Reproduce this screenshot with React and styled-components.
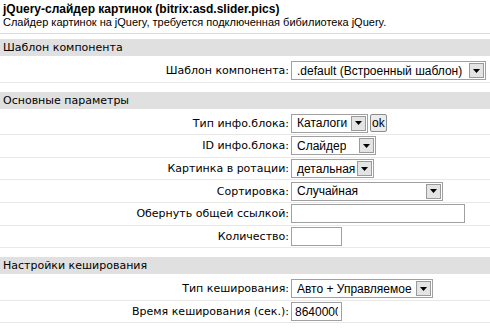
import React from "react";
import styled, { createGlobalStyle } from "styled-components";

const GlobalStyle = createGlobalStyle`
   html, body {
      margin: 0;
      padding: 0;
      background: #fff;
   }
   body {
      font-family: "DejaVu Sans", Verdana, sans-serif;
      font-size: 11px;
      color: #000;
   }
`;

const sections = [
   {
      title: "Шаблон компонента",
      rows: [
         { label: "Шаблон компонента:", type: "select", value: ".default (Встроенный шаблон)", width: 195 },
      ],
   },
   {
      title: "Основные параметры",
      rows: [
         { label: "Тип инфо.блока:", type: "select", value: "Каталоги", width: 77, ok: true },
         { label: "ID инфо.блока:", type: "select", value: "Слайдер", width: 85 },
         { label: "Картинка в ротации:", type: "select", value: "детальная", width: 83 },
         { label: "Сортировка:", type: "select", value: "Случайная", width: 152 },
         { label: "Обернуть общей ссылкой:", type: "input", value: "", width: 174 },
         { label: "Количество:", type: "input", value: "", width: 51 },
      ],
   },
   {
      title: "Настройки кеширования",
      rows: [
         { label: "Тип кеширования:", type: "select", value: "Авто + Управляемое", width: 142 },
         { label: "Время кеширования (сек.):", type: "input", value: "8640000", width: 51 },
      ],
   },
];

const SelectBox = ({ value, width }) => (
   <StyledSelect style={{ width }}>
      <SelectValue>{value}</SelectValue>
      <ArrowButton>
         <svg width="7" height="4" viewBox="0 0 7 4">
            <path d="M0 0h7L3.5 4z" fill="#000" />
         </svg>
      </ArrowButton>
   </StyledSelect>
);

const App = () => {
   return (
      <PageWrapper>
         <GlobalStyle />
         <StyledHeader>
            <Title>jQuery-слайдер картинок (bitrix:asd.slider.pics)</Title>
            <Description>
               Слайдер картинок на jQuery, требуется подключенная бибилиотека jQuery.
            </Description>
         </StyledHeader>
         {sections.map((section) => (
            <Section key={section.title}>
               <SectionTitle>{section.title}</SectionTitle>
               {section.rows.map((row, i) => (
                  <Row key={row.label} $first={i === 0}>
                     <Label>{row.label}</Label>
                     <Control>
                        {row.type === "select" ? (
                           <SelectBox value={row.value} width={row.width} />
                        ) : (
                           <TextInput style={{ width: row.width }} defaultValue={row.value} />
                        )}
                        {row.ok && <OkButton>ok</OkButton>}
                     </Control>
                  </Row>
               ))}
            </Section>
         ))}
      </PageWrapper>
   );
};

const PageWrapper = styled.div`
   width: 490px;
   height: 333px;
   overflow: hidden;
`;

const StyledHeader = styled.div`
   padding: 3px 3px 4px;
   border-bottom: 1px solid #dcdcdc;
`;

const Title = styled.div`
   font-family: "Liberation Sans", Tahoma, sans-serif;
   font-weight: bold;
   font-size: 12px;
   line-height: 13px;
`;

const Description = styled.div`
   font-family: "Liberation Sans", Tahoma, sans-serif;
   font-size: 11px;
   line-height: 13px;
`;

const Section = styled.div`
   margin-top: 5px;

   & + & {
      margin-top: 9px;
   }
`;

const SectionTitle = styled.div`
   background: #e0e0e0;
   height: 17px;
   line-height: 17px;
   padding-left: 3px;
`;

const Row = styled.div`
   display: grid;
   grid-template-columns: 289px 1fr;
   column-gap: 2px;
   align-items: center;
   height: 21.6px;
   padding-top: ${(p) => (p.$first ? "4px" : "0")};
   border-bottom: 1px solid #e8e8e8;
`;

const Label = styled.div`
   text-align: right;
   white-space: nowrap;
`;

const Control = styled.div`
   display: flex;
   align-items: center;
   gap: 2px;
`;

const StyledSelect = styled.div`
   box-sizing: border-box;
   height: 19px;
   display: flex;
   align-items: center;
   justify-content: space-between;
   border: 1px solid #a0a0a0;
   background: #fff;
   padding: 0 1px 0 5px;
`;

const SelectValue = styled.span`
   font-family: "Liberation Sans", Tahoma, sans-serif;
   font-size: 12px;
   white-space: nowrap;
   overflow: hidden;
`;

const ArrowButton = styled.span`
   box-sizing: border-box;
   width: 15px;
   height: 15px;
   flex: none;
   display: flex;
   align-items: center;
   justify-content: center;
   border: 1px solid #9a9a9a;
   background: #e4e4e4;
`;

const TextInput = styled.input`
   box-sizing: border-box;
   height: 19px;
   border: 1px solid #a0a0a0;
   padding: 0 3px;
   font-family: "Liberation Sans", Tahoma, sans-serif;
   font-size: 12px;
   outline: none;
`;

const OkButton = styled.button`
   box-sizing: border-box;
   height: 18px;
   padding: 0 1px;
   border: 1px solid #8c8c8c;
   border-radius: 2px;
   background: #ececec;
   font-family: "Liberation Sans", Tahoma, sans-serif;
   font-size: 12px;
   line-height: 14px;
`;

export default App;
